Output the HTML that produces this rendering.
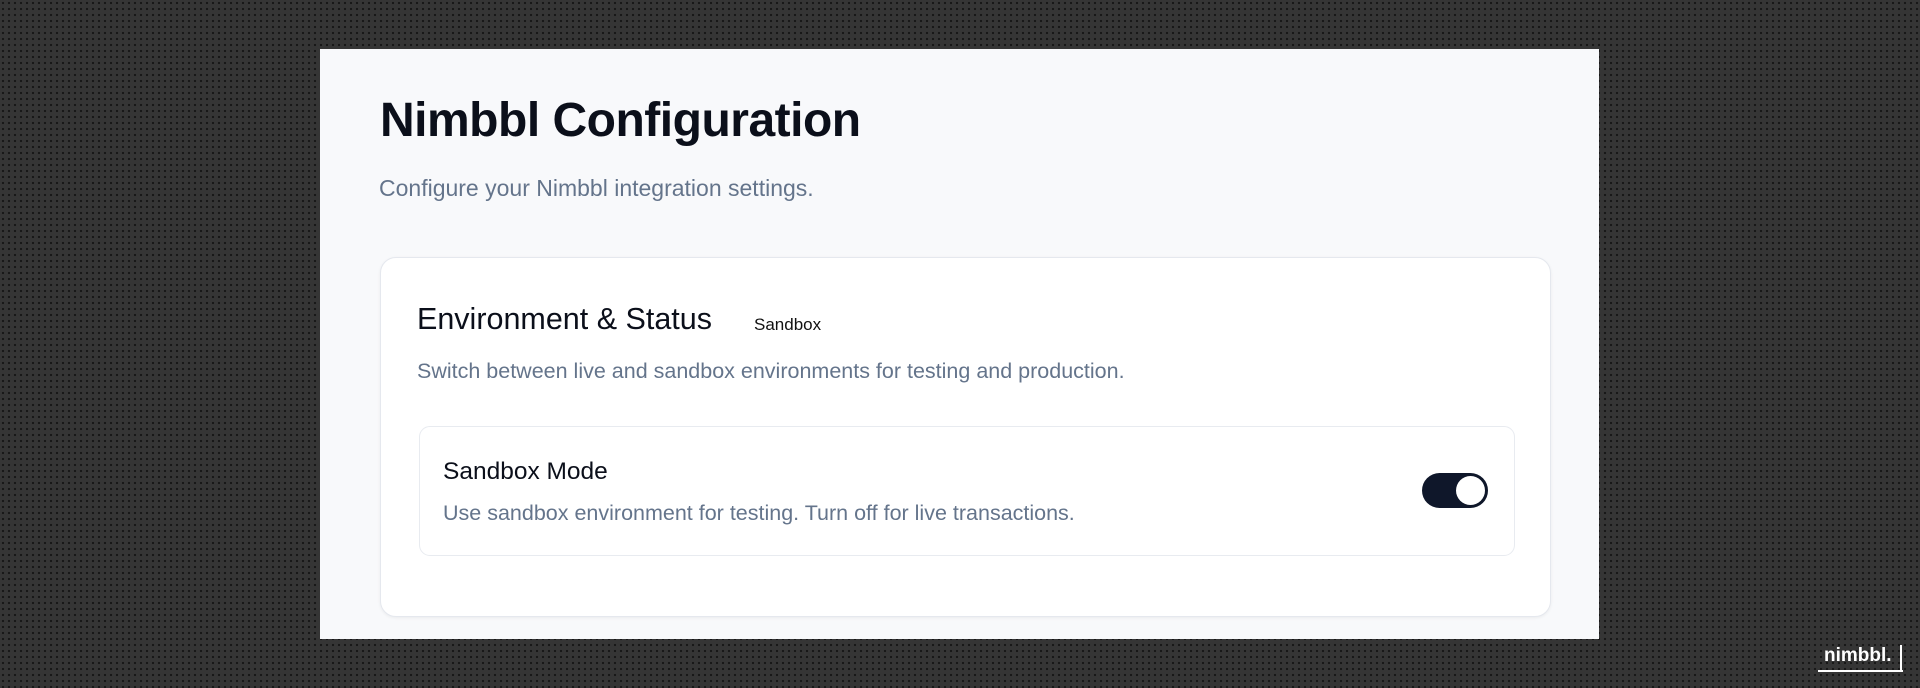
<!DOCTYPE html>
<html><head><meta charset="utf-8"><style>
*{margin:0;padding:0;box-sizing:border-box}
body{width:1920px;height:688px;overflow:hidden;background-color:#353535;background-image:radial-gradient(circle,#161616 1px,transparent 1.3px);background-size:6px 6px;font-family:"Liberation Sans",sans-serif;position:relative}
.panel{position:absolute;left:320px;top:49px;width:1279px;height:590px;background:#f8f9fb}
.title{position:absolute;left:380px;top:93px;font-size:48px;font-weight:bold;color:#0b0f1a;letter-spacing:-0.5px}
.sub{position:absolute;left:379px;top:175px;font-size:23px;color:#64748b}
.card{position:absolute;left:380px;top:257px;width:1171px;height:360px;background:#fff;border:1px solid #e5e8ee;border-radius:16px;box-shadow:0 1px 3px rgba(0,0,0,.06)}
.h{position:absolute;left:417px;top:302px;font-size:30.5px;color:#0b0f1a;font-weight:500}
.badge{position:absolute;left:754px;top:315px;font-size:17px;color:#111}
.d{position:absolute;left:417px;top:359px;font-size:21.5px;color:#64748b}
.inner{position:absolute;left:419px;top:426px;width:1096px;height:130px;border:1px solid #e8ebf0;border-radius:11px;background:#fff}
.sm{position:absolute;left:443px;top:458px;font-size:24.5px;color:#0b0f1a;font-weight:500}
.d2{position:absolute;left:443px;top:501px;font-size:21.5px;color:#64748b}
.tog{position:absolute;left:1422px;top:473px;width:66px;height:35px;border-radius:18px;background:#0f172a}
.tog:after{content:"";position:absolute;right:3px;top:3px;width:29px;height:29px;border-radius:50%;background:#fff}
.logo{position:absolute;left:1824px;top:645px;font-size:19px;font-weight:bold;color:#fff}
.ul{position:absolute;left:1818px;top:670px;width:85px;height:2px;background:#fff}
.vl{position:absolute;left:1900px;top:645px;width:2px;height:27px;background:#fff}
</style></head><body>
<div class="panel"></div>
<div class="title">Nimbbl Configuration</div>
<div class="sub">Configure your Nimbbl integration settings.</div>
<div class="card"></div>
<div class="h">Environment &amp; Status</div>
<div class="badge">Sandbox</div>
<div class="d">Switch between live and sandbox environments for testing and production.</div>
<div class="inner"></div>
<div class="sm">Sandbox Mode</div>
<div class="d2">Use sandbox environment for testing. Turn off for live transactions.</div>
<div class="tog"></div>
<div class="logo">nimbbl.</div>
<div class="ul"></div><div class="vl"></div>
</body></html>
